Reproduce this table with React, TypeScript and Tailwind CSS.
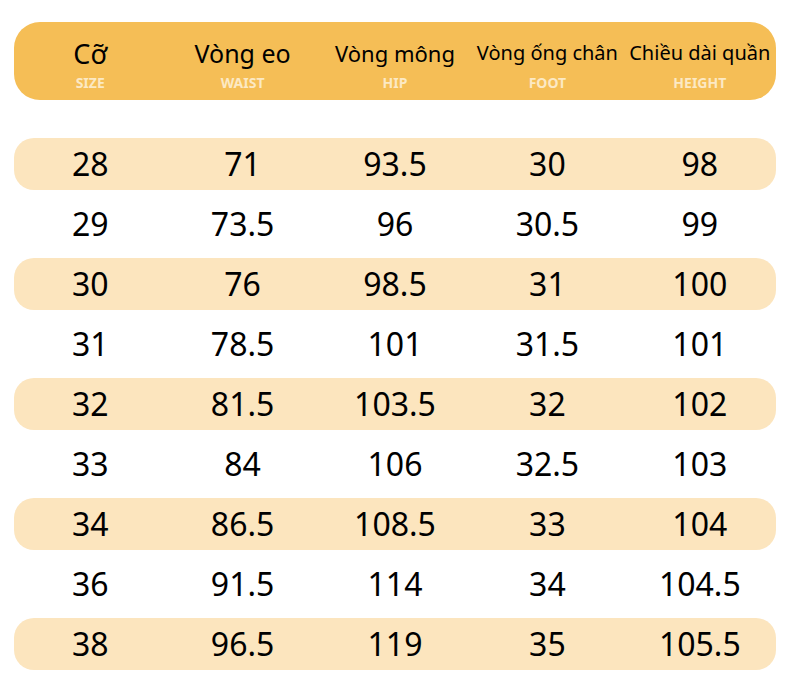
const HEADERS = [
  { title: 'Cỡ', sub: 'SIZE', cls: 'text-[27px]' },
  { title: 'Vòng eo', sub: 'WAIST', cls: 'text-[25px]' },
  { title: 'Vòng mông', sub: 'HIP', cls: 'text-[22px]' },
  { title: 'Vòng ống chân', sub: 'FOOT', cls: 'text-[20px]' },
  { title: 'Chiều dài quần', sub: 'HEIGHT', cls: 'text-[20px]' },
]

const ROWS = [
  ['28', '71', '93.5', '30', '98'],
  ['29', '73.5', '96', '30.5', '99'],
  ['30', '76', '98.5', '31', '100'],
  ['31', '78.5', '101', '31.5', '101'],
  ['32', '81.5', '103.5', '32', '102'],
  ['33', '84', '106', '32.5', '103'],
  ['34', '86.5', '108.5', '33', '104'],
  ['36', '91.5', '114', '34', '104.5'],
  ['38', '96.5', '119', '35', '105.5'],
]

export default function App() {
  return (
    <div className="w-[790px] h-[686px] bg-white px-[14px] pt-[22px] font-['Noto_Sans',sans-serif] text-black">
      <div className="grid grid-cols-5 h-[78px] rounded-[26px] bg-[#f5be56]">
        {HEADERS.map((h) => (
          <div key={h.sub} className="flex flex-col items-center pt-[16px]">
            <div className={`${h.cls} h-[30px] flex items-center leading-none whitespace-nowrap`}>{h.title}</div>
            <div className="mt-[8px] h-[14px] flex items-center text-[14px] font-bold leading-none text-[#fce9c4]">
              {h.sub}
            </div>
          </div>
        ))}
      </div>

      <div className="mt-[38px] flex flex-col gap-[8px]">
        {ROWS.map((row, i) => (
          <div
            key={row[0]}
            className={`grid grid-cols-5 h-[52px] rounded-[20px] ${i % 2 === 0 ? 'bg-[#fce5be]' : 'bg-white'}`}
          >
            {row.map((v, j) => (
              <div key={j} className="flex items-center justify-center text-[32px] leading-none">
                {v}
              </div>
            ))}
          </div>
        ))}
      </div>
    </div>
  )
}
